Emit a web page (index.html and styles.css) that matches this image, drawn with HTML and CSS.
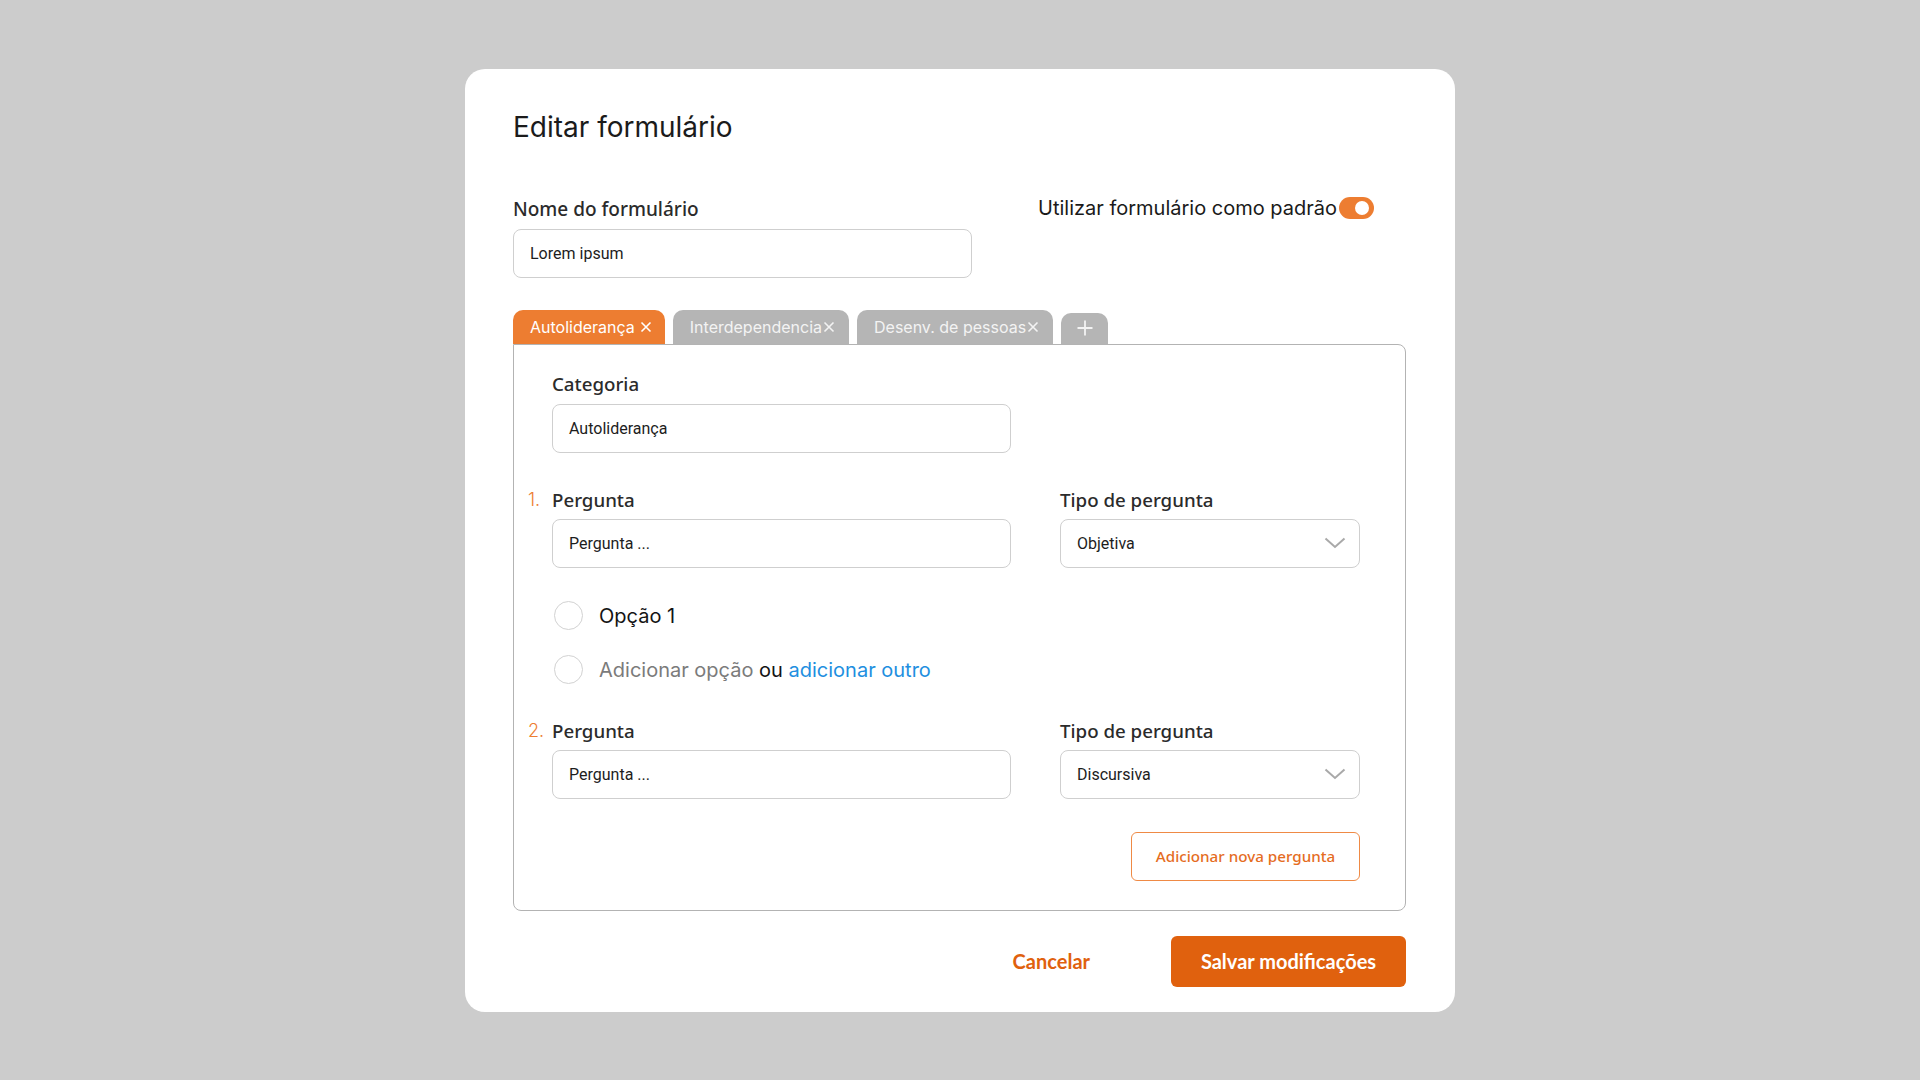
FILE: index.html
```html
<!DOCTYPE html>
<html lang="pt-BR">
<head>
<meta charset="utf-8">
<title>Editar formulário</title>
<link rel="stylesheet" href="styles.css">
</head>
<body>
<div class="overlay">
  <div class="modal">
    <h1 class="modal-title">Editar formulário</h1>

    <div class="head-row">
      <div class="name-field">
        <div class="field-label">Nome do formulário</div>
        <div class="input name-input">Lorem ipsum</div>
      </div>
      <div class="default-toggle">
        <span>Utilizar formulário como padrão</span>
        <span class="switch"><span class="knob"></span></span>
      </div>
    </div>

    <div class="tabs">
      <div class="tab active">Autoliderança<svg class="tab-x spaced" viewBox="0 0 12 12"><path d="M1.5 1.5L10.5 10.5M10.5 1.5L1.5 10.5"/></svg></div>
      <div class="tab">Interdependencia<svg class="tab-x" viewBox="0 0 12 12"><path d="M1.5 1.5L10.5 10.5M10.5 1.5L1.5 10.5"/></svg></div>
      <div class="tab">Desenv. de pessoas<svg class="tab-x" viewBox="0 0 12 12"><path d="M1.5 1.5L10.5 10.5M10.5 1.5L1.5 10.5"/></svg></div>
      <div class="tab tab-add"><svg class="plus" viewBox="0 0 16 16"><path d="M8 0.5V15.5M0.5 8H15.5"/></svg></div>
    </div>

    <div class="panel">
      <div class="row">
        <div class="num"></div>
        <div class="col-main">
          <div class="field-label lg">Categoria</div>
          <div class="input cat-input">Autoliderança</div>
        </div>
      </div>

      <div class="row question">
        <div class="num">1.</div>
        <div class="col-main">
          <div class="field-label lg">Pergunta</div>
          <div class="input q-input">Pergunta ...</div>
        </div>
        <div class="col-side">
          <div class="field-label lg">Tipo de pergunta</div>
          <div class="input select q-input">Objetiva<svg class="chev" viewBox="0 0 22 12"><path d="M1.5 1.5L11 10L20.5 1.5"/></svg></div>
        </div>
      </div>

      <div class="options">
        <div class="option"><span class="radio"></span><span class="opt-text">Opção 1</span></div>
        <div class="option"><span class="radio"></span><span class="opt-text"><span class="muted">Adicionar opção</span> ou <span class="link">adicionar outro</span></span></div>
      </div>

      <div class="row question q2">
        <div class="num">2.</div>
        <div class="col-main">
          <div class="field-label lg">Pergunta</div>
          <div class="input q-input">Pergunta ...</div>
        </div>
        <div class="col-side">
          <div class="field-label lg">Tipo de pergunta</div>
          <div class="input select q-input">Discursiva<svg class="chev" viewBox="0 0 22 12"><path d="M1.5 1.5L11 10L20.5 1.5"/></svg></div>
        </div>
      </div>

      <div class="add-row">
        <button class="btn-outline">Adicionar nova pergunta</button>
      </div>
    </div>

    <div class="footer">
      <button class="btn-text">Cancelar</button>
      <button class="btn-primary">Salvar modificações</button>
    </div>
  </div>
</div>
</body>
</html>
```

FILE: styles.css
```css
* { box-sizing: border-box; }

body {
  margin: 0;
  background: #cccccc;
  font-family: Inter, "Noto Sans", sans-serif;
}

.overlay {
  height: 1080px;
  display: flex;
  align-items: center;
  justify-content: center;
}

.modal {
  width: 990px;
  background: #ffffff;
  border-radius: 20px;
  padding: 41px 49px 25px 48px;
}

.modal-title {
  margin: 0;
  font: 400 28px/34px Inter, sans-serif;
  color: #1b1b1b;
}

.head-row {
  display: flex;
  justify-content: space-between;
  align-items: flex-start;
  margin-top: 54px;
}

.field-label {
  font: 500 19px/22px "Noto Sans", sans-serif;
  color: #2b2b2b;
}

.field-label.lg {
  font-size: 18.7px;
  line-height: 22px;
  padding-bottom: 2px;
}

.input {
  height: 49px;
  border: 1px solid #cfcfcf;
  border-radius: 8px;
  padding: 0 16px;
  display: flex;
  align-items: center;
  font: 400 16px Roboto, sans-serif;
  color: #1d1d1d;
}

.name-input {
  width: 459px;
  margin-top: 9px;
}

.default-toggle {
  display: flex;
  align-items: center;
  gap: 2px;
  margin-top: -2px;
  margin-right: 32px;
  font: 400 20px/24px Inter, sans-serif;
  color: #1a1a1a;
}

.switch {
  width: 35px;
  height: 22px;
  border-radius: 11px;
  background: #ed7d31;
  display: flex;
  align-items: center;
  justify-content: flex-end;
  padding-right: 5px;
}

.knob {
  width: 14px;
  height: 14px;
  border-radius: 50%;
  background: #ffffff;
}

.tabs {
  display: flex;
  align-items: flex-end;
  gap: 8px;
  margin-top: 32px;
}

.tab {
  height: 34px;
  padding: 0 14px 0 17px;
  border-radius: 10px 10px 0 0;
  background: #b5b5b5;
  color: #f3f3f3;
  font: 400 16px Inter, sans-serif;
  display: flex;
  align-items: center;
}

.tab.active {
  background: #ed7d31;
  color: #ffffff;
  padding-right: 13px;
}

.tab-x {
  width: 12px;
  height: 12px;
  margin-left: 1px;
  fill: none;
  stroke: currentColor;
  stroke-width: 1.6;
}

.tab-x.spaced {
  margin-left: 5px;
}

.tab-add {
  width: 47px;
  height: 31px;
  padding: 0;
  justify-content: center;
}

.plus {
  width: 16px;
  height: 16px;
  fill: none;
  stroke: #f3f3f3;
  stroke-width: 1.8;
}

.panel {
  border: 1px solid #b3b3b3;
  border-radius: 0 8px 8px 8px;
  padding: 28px 45px 29px 14px;
}

.row {
  display: flex;
  align-items: flex-start;
}

.num {
  width: 24px;
  flex: none;
  font: 300 18px/21px Inter, sans-serif;
  color: #ed7d31;
}

.col-main {
  width: 459px;
}

.col-side {
  width: 300px;
  margin-left: 49px;
}

.cat-input {
  margin-top: 7px;
}

.question {
  margin-top: 36px;
}

.q-input {
  margin-top: 6px;
}

.q2 {
  margin-top: 35px;
}

.select {
  justify-content: space-between;
  padding-right: 13px;
}

.chev {
  width: 22px;
  height: 12px;
  fill: none;
  stroke: #a9a9a9;
  stroke-width: 2;
}

.options {
  margin-top: 33px;
  padding-left: 26px;
  display: flex;
  flex-direction: column;
  gap: 24px;
}

.option {
  display: flex;
  align-items: center;
  height: 30px;
}

.radio {
  width: 29px;
  height: 29px;
  border: 1.5px solid #d2d2d2;
  border-radius: 50%;
  flex: none;
}

.opt-text {
  margin-left: 16px;
  font: 400 20px Inter, sans-serif;
  color: #141414;
}

.muted {
  color: #7b7b7b;
}

.link {
  color: #1e8fe0;
}

.add-row {
  display: flex;
  justify-content: flex-end;
  margin-top: 33px;
}

.btn-outline {
  width: 229px;
  height: 49px;
  border: 1.5px solid #ef8a45;
  border-radius: 6px;
  background: #ffffff;
  color: #e56d1f;
  font: 500 15.2px "Noto Sans", sans-serif;
  cursor: pointer;
}

.footer {
  display: flex;
  justify-content: flex-end;
  align-items: center;
  gap: 57px;
  margin-top: 25px;
}

.btn-text {
  border: 0;
  background: none;
  padding: 0 24px;
  color: #e0610e;
  font: 700 20px/24px Lato, sans-serif;
  cursor: pointer;
}

.btn-primary {
  width: 235px;
  height: 51px;
  border: 0;
  border-radius: 6px;
  background: #e0610e;
  color: #ffffff;
  font: 700 20px/24px Lato, sans-serif;
  cursor: pointer;
}
```
